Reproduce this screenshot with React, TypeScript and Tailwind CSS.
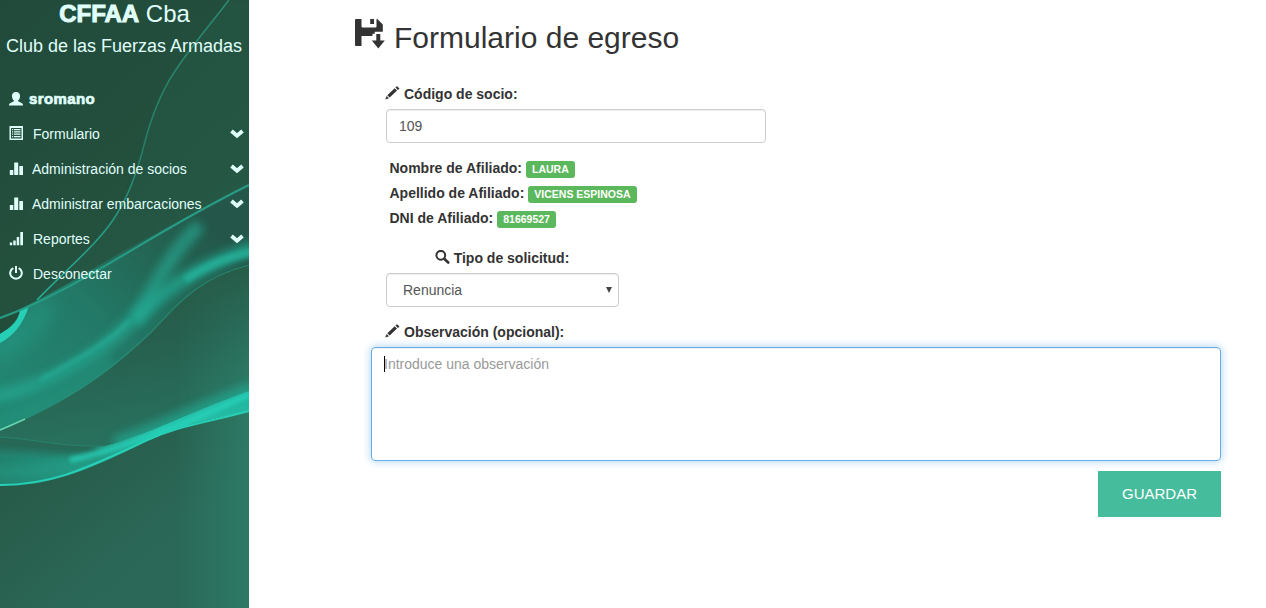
import type { ReactNode } from 'react';

function Pencil() {
  return (
    <svg className="-ml-px h-[14px] w-[15px] shrink-0" viewBox="0 0 15 14" fill="currentColor">
      <path d="M.3 13.500 1.600 9.900 4 12.200ZM2.300 9.200 9.700 2.200 12 4.500 4.700 11.600ZM10.500 1.500 11.600.4Q12 0 12.400.4L14.200 2.200Q14.500 2.500 14.200 2.900L12.900 3.900Z" />
    </svg>
  );
}

function Search() {
  return (
    <svg className="-ml-px h-[14px] w-[15px] shrink-0" viewBox="0 0 15 14" fill="none" stroke="currentColor">
      <circle cx="5.8" cy="5.300" r="4.400" strokeWidth="2" />
      <path d="m9.500 9 3.700 3.500" strokeWidth="2.600" strokeLinecap="round" />
    </svg>
  );
}

function FloppySave() {
  return (
    <svg className="h-[30px] w-[30px] shrink-0" viewBox="0 0 30 30" fill="currentColor">
      <path d="M1 0H6.500V7.500Q6.500 8.500 7.500 8.500H20.500Q21.500 8.500 21.500 7.500V0H22.300L27.800 5.500V12.800H19.800V14.800H17.500V17H6.500V27H1Q0 27 0 26V1Q0 0 1 0ZM15.200 0H19V5H15.200Z" />
      <path d="M21.300 15H25.300V21.500H29.800L23.300 29.500 16.800 21.500H21.300Z" />
    </svg>
  );
}

function User() {
  return (
    <svg className="h-[14px] w-[14px]" viewBox="0 0 14 14" fill="currentColor">
      <path d="M7 0C9.500 0 11 1.500 11 3.900 11 6 10.200 7.500 9.100 8.400V9.300L13 11.300Q14 11.900 14 13V13.500H0V13Q0 11.900 1 11.300L4.900 9.300V8.400C3.800 7.500 3 6 3 3.900 3 1.500 4.500 0 7 0Z" />
    </svg>
  );
}

function ListIcon() {
  return (
    <svg className="-mt-px h-[14px] w-[14px]" viewBox="0 0 14 14">
      <path fill="currentColor" fillRule="evenodd" d="M.5 0H14V14H.5ZM2 2V12.500H12.500V2ZM3 3H4.200V4.200H3ZM5 3H11.500V4.200H5ZM3 5.200H4.200V6.400H3ZM5 5.200H11.500V6.400H5ZM3 7.600H4.200V8.800H3ZM5 7.600H11.500V8.800H5ZM3 10H4.200V11.200H3ZM5 10H11.500V11.200H5Z" />
    </svg>
  );
}

function Stats() {
  return (
    <svg className="h-[14px] w-[14px]" viewBox="0 0 14 14" fill="currentColor">
      <rect x="0.800" y="8" width="3.500" height="5" rx="0.300" />
      <rect x="5.200" y="0.500" width="4" height="12.500" rx="0.300" />
      <rect x="10.300" y="4" width="3.700" height="9" rx="0.300" />
    </svg>
  );
}

function Signal() {
  return (
    <svg className="h-[14px] w-[14px]" viewBox="0 0 14 14" fill="currentColor">
      <path d="M.8 10.500H3.200V13.200H.8ZM4.300 8.500H6.700V13.200H4.300ZM7.700 5H10.200V13.200H7.700ZM11.300 0H14V13.200H11.300Z" />
    </svg>
  );
}

function Power() {
  return (
    <svg className="-mt-[2px] h-[14px] w-[14px]" viewBox="0 0 14 14" fill="none" stroke="currentColor" strokeWidth="2">
      <path d="M4.300 2.200A5.800 5.600 0 1 0 9.700 2.200M7 0V7" />
    </svg>
  );
}

function Chevron() {
  return (
    <svg className="mt-px mr-[5px] ml-auto h-[10px] w-[14px]" viewBox="0 0 14 10" fill="none" stroke="currentColor">
      <path d="m1.500 2 5.500 4.800L12.500 2" strokeWidth="3.800" />
    </svg>
  );
}

function Waves() {
  return (
    <svg className="absolute inset-0 h-full w-full" viewBox="0 0 249 608" preserveAspectRatio="none">
      <defs>
        <linearGradient id="base" x1="0" y1="0" x2="0.350" y2="1">
          <stop offset="0" stopColor="#214a3a" />
          <stop offset="0.450" stopColor="#24503e" />
          <stop offset="0.750" stopColor="#285c4a" />
          <stop offset="1" stopColor="#2b6858" />
        </linearGradient>
        <linearGradient id="edge">
          <stop offset="0.700" stopColor="#2e846e" stopOpacity="0" />
          <stop offset="1" stopColor="#2e846e" stopOpacity="0.650" />
        </linearGradient>
        <linearGradient id="edgeFade" x1="0" y1="250" x2="0" y2="608" gradientUnits="userSpaceOnUse">
          <stop offset="0" stopColor="#000" />
          <stop offset="0.400" stopColor="#fff" />
        </linearGradient>
        <mask id="fade"><rect width="249" height="608" fill="url(#edgeFade)" /></mask>
        <linearGradient id="veil" x1="20" y1="400" x2="200" y2="215" gradientUnits="userSpaceOnUse">
          <stop offset="0" stopColor="#238672" />
          <stop offset="0.450" stopColor="#237866" />
          <stop offset="0.800" stopColor="#246352" />
          <stop offset="1" stopColor="#24574a" />
        </linearGradient>
        <linearGradient id="thread" x1="0" y1="1" x2="0" y2="0">
          <stop offset="0" stopColor="#25b49b" />
          <stop offset="0.500" stopColor="#287e68" />
          <stop offset="1" stopColor="#2a8a72" />
        </linearGradient>
        <linearGradient id="mid" x1="0" y1="0" x2="0.200" y2="1">
          <stop offset="0" stopColor="#265641" />
          <stop offset="0.500" stopColor="#275f4e" />
          <stop offset="1" stopColor="#28705d" />
        </linearGradient>
        <linearGradient id="ribbon">
          <stop offset="0" stopColor="#23836f" />
          <stop offset="0.450" stopColor="#25a48e" />
          <stop offset="0.650" stopColor="#26c3ab" />
          <stop offset="1" stopColor="#24b7a0" />
        </linearGradient>
        <filter id="b1" filterUnits="userSpaceOnUse" x="-50" y="-50" width="350" height="708"><feGaussianBlur stdDeviation="0.600" /></filter>
        <filter id="b2" filterUnits="userSpaceOnUse" x="-50" y="-50" width="350" height="708"><feGaussianBlur stdDeviation="2" /></filter>
        <filter id="b5" filterUnits="userSpaceOnUse" x="-50" y="-50" width="350" height="708"><feGaussianBlur stdDeviation="5" /></filter>
        <filter id="b9" filterUnits="userSpaceOnUse" x="-50" y="-50" width="350" height="708"><feGaussianBlur stdDeviation="10" /></filter>
        <clipPath id="upper"><path d="M0 319 40 299C95 269 150 233 249 185V265C190 280 170 315 145 338 105 375 70 400 0 430Z" /></clipPath>
        <clipPath id="gap"><path d="M0 430C70 400 105 375 145 338 170 315 190 280 249 265V400L105 450 0 437Z" /></clipPath>
        <clipPath id="lower"><path d="M0 437C35 439 60 447 105 446 150 434 180 416 249 391V411C190 424 178 426 145 442 80 475 45 486 0 486Z" /></clipPath>
      </defs>
      <rect width="249" height="608" fill="url(#base)" />
      <path d="M38 300C98 238 121 228 142 153 160 78 183 60 229 0H249V190L38 300Z" fill="#25604d" opacity="0.300" filter="url(#b2)" />
      <path d="M0 430C70 400 105 375 145 338 170 315 190 280 249 265V395C180 416 150 434 105 446 60 447 35 439 0 437Z" fill="url(#mid)" />
      <rect y="250" width="249" height="358" fill="url(#edge)" mask="url(#fade)" />
      <path d="M0 319 40 299C95 269 150 233 249 185V265C190 280 170 315 145 338 105 375 70 400 0 430Z" fill="url(#veil)" />
      <g clipPath="url(#upper)">
        <path d="M-10 352C20 340 38 325 48 300" fill="none" stroke="#26a992" strokeWidth="20" opacity="0.450" filter="url(#b9)" />
        <path d="M-10 398C50 388 105 350 133 320 155 290 168 255 200 225" fill="none" stroke="#25ab94" strokeWidth="14" opacity="0.650" filter="url(#b5)" />
        <path d="M135 322C160 292 190 270 255 247" fill="none" stroke="#24b099" strokeWidth="14" opacity="0.700" filter="url(#b5)" />
        <path d="M185 280C205 267 225 257 255 252" fill="none" stroke="#25bda5" strokeWidth="8" opacity="0.600" filter="url(#b2)" />
        <path d="M-10 428C30 408 80 390 112 360" fill="none" stroke="#239580" strokeWidth="18" opacity="0.500" filter="url(#b5)" />
        <path d="M40 380C80 358 110 342 130 320" fill="none" stroke="#27b8a0" strokeWidth="3.500" opacity="0.650" filter="url(#b2)" />
      </g>
      <path d="M0 319 20 311C17 322 9 329 0 334Z" fill="#234d3b" />
      <path d="M0 334C12 327 19 320 20 310L29 306C23 325 12 337 0 343Z" fill="#25ceb6" filter="url(#b1)" />
      <path d="M0 318C75 292 145 236 249 185" fill="none" stroke="#279c84" strokeWidth="2" filter="url(#b1)" />
      <path d="M37 300C98 238 121 228 142 153 160 78 183 60 229 0" fill="none" stroke="url(#thread)" strokeWidth="1.500" filter="url(#b1)" />
      <path d="M0 430C70 400 105 375 145 338 170 315 190 280 249 265" fill="none" stroke="#289a82" strokeWidth="1.200" opacity="0.650" filter="url(#b1)" />
      <path d="M0 430Q12 425 25 419" fill="none" stroke="#76e2b8" strokeWidth="1.500" opacity="0.850" filter="url(#b1)" />
      <g clipPath="url(#gap)">
        <path d="M115 444C160 430 190 412 255 389" fill="none" stroke="#24ab94" strokeWidth="15" opacity="0.700" filter="url(#b5)" />
      </g>
      <path d="M0 437C35 439 60 447 105 446 150 434 180 416 249 391V411C190 424 178 426 145 442 80 475 45 486 0 486Z" fill="url(#ribbon)" filter="url(#b1)" />
      <g clipPath="url(#lower)">
        <path d="M-10 441C40 444 65 448 98 447" fill="none" stroke="#266553" strokeWidth="16" filter="url(#b5)" />
        <path d="M-10 472C50 475 90 458 130 445" fill="none" stroke="#259b85" strokeWidth="8" opacity="0.700" filter="url(#b5)" />
        <path d="M70 460C110 452 140 439 160 432 195 421 215 408 252 394" fill="none" stroke="#27d5bd" strokeWidth="5" opacity="0.850" filter="url(#b2)" />
      </g>
      <path d="M0 437C35 439 60 447 105 446" fill="none" stroke="#28816b" strokeWidth="1" filter="url(#b1)" />
      <path d="M0 485C48 485 80 472 145 441 178 426 200 424 249 411" fill="none" stroke="#27d0b7" strokeWidth="2" filter="url(#b1)" />
    </svg>
  );
}

function MenuItem({ icon, label, indent, open }: { icon: ReactNode; label: string; indent: string; open?: boolean }) {
  return (
    <li className="flex h-[35px] items-center pl-[9px]">
      {icon}
      <span className={indent}>{label}</span>
      {open && <Chevron />}
    </li>
  );
}

function Sidebar() {
  return (
    <aside className="relative w-[249px] shrink-0 overflow-hidden text-[#e0fffa]">
      <Waves />
      <div className="relative">
        <h3 className="pt-px text-center text-[24px] leading-[26px]">
          <b className="[-webkit-text-stroke:1px_currentColor]">CFFAA</b> Cba
        </h3>
        <h4 className="-ml-px mt-[9px] text-center text-[18px] leading-[20px] whitespace-nowrap">Club de las Fuerzas Armadas</h4>
        <ul className="mt-[26px] text-[14px] leading-[20px]">
          <li className="flex h-[34px] items-center pl-[9px]">
            <span className="-mt-px"><User /></span>
            <b className="ml-[6px] text-[15px] tracking-[0.4px] [-webkit-text-stroke:0.7px_currentColor]">sromano</b>
          </li>
          <MenuItem icon={<ListIcon />} label="Formulario" indent="ml-[10px]" open />
          <MenuItem icon={<Stats />} label="Administración de socios" indent="ml-[9px]" open />
          <MenuItem icon={<Stats />} label="Administrar embarcaciones" indent="ml-[9px]" open />
          <MenuItem icon={<Signal />} label="Reportes" indent="ml-[10px]" open />
          <MenuItem icon={<Power />} label="Desconectar" indent="ml-[10px]" />
        </ul>
      </div>
    </aside>
  );
}

function Label({ icon, children }: { icon: ReactNode; children: ReactNode }) {
  return (
    <label className="flex h-[20px] items-center gap-[4px] font-bold">
      <span className="-mt-[2px]">{icon}</span>
      <span>{children}</span>
    </label>
  );
}

function Detail({ name, value }: { name: string; value: string }) {
  return (
    <div className="flex h-[25px] items-center gap-[4px] pl-[3.5px] font-bold">
      <span className="-mt-px">{name}</span>
      <span className="mt-[2px] h-[17px] rounded-[3px] bg-[#5cb85c] px-[6px] text-[10.5px] leading-[17px] text-white">{value}</span>
    </div>
  );
}

export default function App() {
  return (
    <div className="flex h-screen overflow-hidden bg-white font-['Liberation_Sans',Arial,sans-serif] text-[14px] leading-[20px] text-[#333]">
      <Sidebar />
      <main className="flex-1 pr-[45px] pl-[106px]">
        <h2 className="mt-[21px] flex h-[33px] text-[30px] leading-[33px]">
          <span className="-mt-[2px]"><FloppySave /></span>
          <span className="ml-[9px]">Formulario de egreso</span>
        </h2>
        <form className="pt-[30px] pl-[16px]">
          <div className="pl-[15px]">
            <Label icon={<Pencil />}>Código de socio:</Label>
            <input defaultValue="109" className="mt-[5px] block h-[34px] w-[380px] rounded-[4px] border border-[#ccc] px-[12px] text-[#555] shadow-[inset_0_1px_1px_rgba(0,0,0,0.075)] outline-none" />
            <div className="mt-[13px]">
              <Detail name="Nombre de Afiliado:" value="LAURA" />
              <Detail name="Apellido de Afiliado:" value="VICENS ESPINOSA" />
              <Detail name="DNI de Afiliado:" value="81669527" />
            </div>
            <div className="mt-[17px] w-[233px]">
              <div className="flex justify-center"><Label icon={<Search />}>Tipo de solicitud:</Label></div>
              <div className="mt-[5px] flex h-[34px] items-center justify-between rounded-[4px] border border-[#ccc] pr-[6px] pl-[16px] text-[#555] shadow-[inset_0_1px_1px_rgba(0,0,0,0.075)]">
                <span>Renuncia</span>
                <svg className="h-[6px] w-[6px]" viewBox="0 0 6 6" fill="#444"><path d="M0 0H6L3 6Z" /></svg>
              </div>
            </div>
            <div className="mt-[15px]"><Label icon={<Pencil />}>Observación (opcional):</Label></div>
          </div>
          <div className="mt-[5px] flex h-[114px] rounded-[4px] border border-[#66afe9] px-[12px] py-[6px] text-[#999] shadow-[inset_0_1px_1px_rgba(0,0,0,0.075),0_0_8px_rgba(102,175,233,0.6)]">
            <span className="mt-[2px] h-[16px] w-px bg-black" />
            <span className="-ml-px">Introduce una observación</span>
          </div>
          <div className="mt-[10px] flex justify-end">
            <button type="button" className="h-[46px] w-[123px] bg-[#45bc9b] text-[15px] text-white">GUARDAR</button>
          </div>
        </form>
      </main>
    </div>
  );
}
